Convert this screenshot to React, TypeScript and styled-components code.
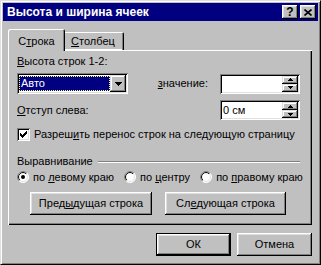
import React, { useId } from "react";
import styled, { createGlobalStyle } from "styled-components";

const Global = createGlobalStyle`
  html, body { margin: 0; padding: 0; background: #c0c0c0; }
  body { font-family: "Liberation Sans", Arial, sans-serif; font-size: 11px; color: #000; }
  * { box-sizing: border-box; }
`;

const raised = `box-shadow: inset -1px -1px #000, inset 1px 1px #fff, inset -2px -2px #808080, inset 2px 2px #dfdfdf;`;
const sunken = `box-shadow: inset 1px 1px #808080, inset -1px -1px #fff, inset 2px 2px #000, inset -2px -2px #dfdfdf;`;

const Window = styled.div`
  width: 321px;
  height: 265px;
  background: #c0c0c0;
  border: 1px solid;
  border-color: #dfdfdf #000 #000 #dfdfdf;
  box-shadow: inset 1px 1px #fff, inset -1px -1px #808080;
  padding: 2px;
  display: flex;
  flex-direction: column;
`;

const TitleBar = styled.div`
  height: 18px;
  flex: none;
  background: #000080;
  display: flex;
  align-items: center;
  padding: 0 2px 0 4px;
`;

const Title = styled.div`
  flex: 1;
  color: #fff;
  font-weight: bold;
  font-size: 12px;
  line-height: 18px;
  white-space: nowrap;
`;

const CaptionButton = styled.div<{ $gap?: boolean }>`
  width: 16px;
  height: 14px;
  background: #c0c0c0;
  ${raised}
  display: flex;
  align-items: center;
  justify-content: center;
  margin-left: ${(p) => (p.$gap ? 2 : 0)}px;
  font-weight: bold;
  font-size: 12px;
  line-height: 14px;
`;

const Body = styled.div`
  flex: 1;
  display: flex;
  flex-direction: column;
  padding: 8px 6px 6px 5px;
`;

const TabRow = styled.div`
  height: 21px;
  display: flex;
  align-items: flex-end;
  position: relative;
  z-index: 1;
`;

const Tab = styled.div<{ $active?: boolean }>`
  position: relative;
  z-index: ${(p) => (p.$active ? 2 : 1)};
  width: ${(p) => (p.$active ? 57 : 62)}px;
  height: ${(p) => (p.$active ? 22 : 18)}px;
  margin-bottom: ${(p) => (p.$active ? -1 : 0)}px;
  margin-left: ${(p) => (p.$active ? 0 : -3)}px;
  background: #c0c0c0;
  border-radius: 2px 2px 0 0;
  box-shadow: ${(p) =>
    p.$active
      ? "inset 1px 1px #fff, inset -1px 0 #000, inset -2px 0 #808080"
      : "inset 1px 1px #fff, inset -1px 0 #000, inset -2px 0 #808080, inset 0 -1px #fff"};
  text-align: center;
  padding-top: ${(p) => (p.$active ? 6 : 3)}px;
  line-height: 13px;
`;

const Panel = styled.div`
  height: 175px;
  flex: none;
  background: #c0c0c0;
  box-shadow: inset 1px 1px #fff, inset -1px -1px #000, inset -2px -2px #808080;
  padding: 5px 12px 0 9px;
  display: flex;
  flex-direction: column;
`;

const Label = styled.div`
  line-height: 13px;
  height: 13px;
  white-space: nowrap;
`;

const Text = styled.span`
  white-space: nowrap;
`;

const Key = styled.span`
  text-decoration: underline;
  text-underline-offset: 1px;
`;

const FieldRow = styled.div<{ $top: number; $h: number }>`
  display: flex;
  align-items: center;
  margin-top: ${(p) => p.$top}px;
  height: ${(p) => p.$h}px;
`;

const Spacer = styled.div`
  flex: 1;
`;

const Combo = styled.div`
  width: 111px;
  height: 21px;
  background: #fff;
  ${sunken}
  padding: 2px;
  display: flex;
`;

const ComboValue = styled.div`
  flex: 1;
  margin: 1px 0 1px 0;
  background: #000080;
  color: #fff;
  border: 1px dotted #ffff80;
  line-height: 13px;
  padding-left: 1px;
`;

const DropButton = styled.div`
  width: 16px;
  background: #c0c0c0;
  box-shadow: inset -1px -1px #000, inset 1px 1px #dfdfdf, inset -2px -2px #808080, inset 2px 2px #fff;
  display: flex;
  align-items: center;
  justify-content: center;
`;

const SpinBox = styled.div`
  width: 80px;
  height: 20px;
  background: #fff;
  ${sunken}
  padding: 2px;
  display: flex;
`;

const SpinText = styled.div`
  flex: 1;
  line-height: 16px;
  padding-left: 1px;
`;

const SpinButtons = styled.div`
  width: 16px;
  display: flex;
  flex-direction: column;
`;

const SpinButton = styled.div`
  flex: 1;
  background: #c0c0c0;
  box-shadow: inset -1px -1px #000, inset 1px 1px #dfdfdf, inset -2px -2px #808080, inset 2px 2px #fff;
  display: flex;
  align-items: center;
  justify-content: center;
`;

const ValueLabel = styled(Label)`
  margin-right: 12px;
`;

const CheckRow = styled.div`
  display: flex;
  align-items: center;
  margin-top: 8px;
  height: 13px;
  gap: 4px;
`;

const CheckBox = styled.div`
  width: 13px;
  height: 13px;
  background: #fff;
  ${sunken}
  position: relative;
`;

const GroupHeader = styled.div`
  display: flex;
  align-items: center;
  margin-top: 14px;
  height: 13px;
  gap: 5px;
`;

const Etched = styled.div`
  flex: 1;
  height: 2px;
  border-top: 1px solid #808080;
  border-bottom: 1px solid #fff;
`;

const RadioRow = styled.div`
  display: flex;
  align-items: center;
  margin-top: 2px;
  height: 13px;
  gap: 10px;
`;

const RadioItem = styled.div`
  display: flex;
  align-items: center;
  gap: 4px;
  white-space: nowrap;
`;

const ButtonRow = styled.div<{ $top: number; $pad: number; $gap: number; $end?: boolean }>`
  display: flex;
  justify-content: ${(p) => (p.$end ? "flex-end" : "flex-start")};
  margin-top: ${(p) => p.$top}px;
  padding-left: ${(p) => p.$pad}px;
  gap: ${(p) => p.$gap}px;
`;

const Button = styled.div<{ $w: number; $default?: boolean }>`
  width: ${(p) => p.$w}px;
  height: 23px;
  background: #c0c0c0;
  box-shadow: ${(p) =>
    p.$default
      ? "inset 0 0 0 1px #000, inset -2px -2px #000, inset 2px 2px #fff, inset -3px -3px #808080, inset 3px 3px #dfdfdf"
      : "inset -1px -1px #000, inset 1px 1px #fff, inset -2px -2px #808080, inset 2px 2px #dfdfdf"};
  display: flex;
  align-items: center;
  justify-content: center;
  line-height: 13px;
  white-space: nowrap;
`;

const Arrow = ({ dir, w }: { dir: "up" | "down"; w: number }) => {
  const h = Math.ceil(w / 2);
  const pts =
    dir === "down" ? `0,0 ${w},0 ${w / 2},${h}` : `0,${h} ${w},${h} ${w / 2},0`;
  return (
    <svg width={w} height={h} viewBox={`0 0 ${w} ${h}`} shapeRendering="crispEdges">
      <polygon points={pts} fill="#000" />
    </svg>
  );
};

const CheckMark = () => {
  const rows = ["......X", ".....XX", "X...XXX", "XX.XXX.", "XXXXX..", ".XXX...", "..X...."];
  return (
    <svg width="13" height="13" style={{ position: "absolute", left: 0, top: 0 }} shapeRendering="crispEdges">
      {rows.flatMap((r, y) =>
        r.split("").map((c, x) =>
          c === "X" ? <rect key={`${x}-${y}`} x={x + 3} y={y + 3} width="1" height="1" fill="#000" /> : null
        )
      )}
    </svg>
  );
};

const Radio = ({ checked }: { checked?: boolean }) => {
  const id = useId().replace(/:/g, "");
  return (
    <svg width="12" height="12" viewBox="0 0 12 12">
      <defs>
        <linearGradient id={`o${id}`} x1="0" y1="0" x2="1" y2="1">
          <stop offset="0.5" stopColor="#808080" />
          <stop offset="0.5" stopColor="#fff" />
        </linearGradient>
        <linearGradient id={`i${id}`} x1="0" y1="0" x2="1" y2="1">
          <stop offset="0.5" stopColor="#000" />
          <stop offset="0.5" stopColor="#dfdfdf" />
        </linearGradient>
      </defs>
      <circle cx="6" cy="6" r="5.5" fill="#fff" stroke={`url(#o${id})`} strokeWidth="1" />
      <circle cx="6" cy="6" r="4.5" fill="#fff" stroke={`url(#i${id})`} strokeWidth="1" />
      {checked && <circle cx="6" cy="6" r="2" fill="#000" />}
    </svg>
  );
};

const CloseGlyph = () => (
  <svg width="8" height="7" viewBox="0 0 8 7">
    <path d="M0.5 0.5 L7.5 6.5 M7.5 0.5 L0.5 6.5" stroke="#000" strokeWidth="1.6" />
  </svg>
);

export default function App() {
  return (
    <>
      <Global />
      <Window>
        <TitleBar>
          <Title>Высота и ширина ячеек</Title>
          <CaptionButton>?</CaptionButton>
          <CaptionButton $gap>
            <CloseGlyph />
          </CaptionButton>
        </TitleBar>
        <Body>
          <TabRow>
            <Tab $active>
              С<Key>т</Key>рока
            </Tab>
            <Tab>
              <Key>С</Key>толбец
            </Tab>
          </TabRow>
          <Panel>
            <Label>
              <Key>В</Key>ысота строк 1-2:
            </Label>
            <FieldRow $top={5} $h={21}>
              <Combo>
                <ComboValue>Авто</ComboValue>
                <DropButton>
                  <Arrow dir="down" w={7} />
                </DropButton>
              </Combo>
              <Spacer />
              <ValueLabel>
                <Key>з</Key>начение:
              </ValueLabel>
              <SpinBox>
                <SpinText />
                <SpinButtons>
                  <SpinButton>
                    <Arrow dir="up" w={5} />
                  </SpinButton>
                  <SpinButton>
                    <Arrow dir="down" w={5} />
                  </SpinButton>
                </SpinButtons>
              </SpinBox>
            </FieldRow>
            <FieldRow $top={6} $h={20}>
              <Label>
                <Key>О</Key>тступ слева:
              </Label>
              <Spacer />
              <SpinBox>
                <SpinText>0 см</SpinText>
                <SpinButtons>
                  <SpinButton>
                    <Arrow dir="up" w={5} />
                  </SpinButton>
                  <SpinButton>
                    <Arrow dir="down" w={5} />
                  </SpinButton>
                </SpinButtons>
              </SpinBox>
            </FieldRow>
            <CheckRow>
              <CheckBox>
                <CheckMark />
              </CheckBox>
              <Label>
                Разреш<Key>и</Key>ть перенос строк на следующую страницу
              </Label>
            </CheckRow>
            <GroupHeader>
              <Label>Выравнивание</Label>
              <Etched />
            </GroupHeader>
            <RadioRow>
              <RadioItem>
                <Radio checked />
                <Text>
                  по <Key>л</Key>евому краю
                </Text>
              </RadioItem>
              <RadioItem>
                <Radio />
                <Text>
                  по <Key>ц</Key>ентру
                </Text>
              </RadioItem>
              <RadioItem>
                <Radio />
                <Text>
                  по <Key>п</Key>равому краю
                </Text>
              </RadioItem>
            </RadioRow>
            <ButtonRow $top={9} $pad={13} $gap={13}>
              <Button $w={122}>
                Пред<Key>ы</Key>дущая строка
              </Button>
              <Button $w={121}>
                Сл<Key>е</Key>дующая строка
              </Button>
            </ButtonRow>
          </Panel>
          <ButtonRow $top={8} $pad={0} $gap={6} $end>
            <Button $w={75} $default>
              ОК
            </Button>
            <Button $w={75}>Отмена</Button>
          </ButtonRow>
        </Body>
      </Window>
    </>
  );
}
